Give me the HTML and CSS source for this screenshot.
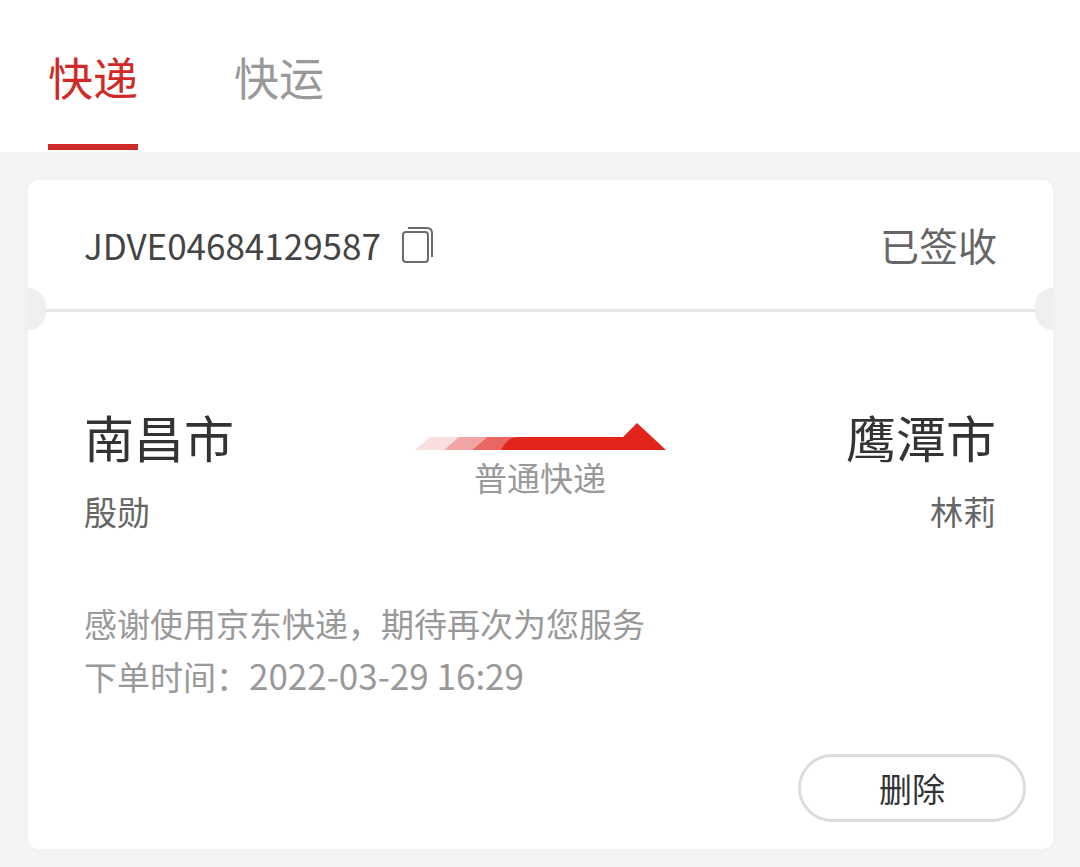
FILE: index.html
```
<!DOCTYPE html>
<html lang="zh-CN">
<head>
    <meta charset="UTF-8">
    <meta name="viewport" content="width=device-width, initial-scale=1.0">
    <title>快递</title>
    <link rel="stylesheet" href="styles.css">
</head>
<body>
    <header>
        <nav class="tabs">
            <a class="tab active" href="#">快递</a>
            <a class="tab" href="#">快运</a>
        </nav>
    </header>

    <main class="card">
        <div class="card-head">
            <span class="number">JDVE04684129587</span>
            <button class="copy" type="button" aria-label="复制">
                <svg width="32" height="38" viewBox="0 0 32 38" fill="none" stroke="#6b6b6b" stroke-width="2">
                    <rect x="2" y="6" width="25" height="30" rx="3"/>
                    <path d="M7 2H26Q31 2 31 7V31"/>
                </svg>
            </button>
            <span class="status">已签收</span>
        </div>

        <div class="divider"></div>

        <div class="card-body">
            <div class="route">
                <div class="place">
                    <h2>南昌市</h2>
                    <p>殷勋</p>
                </div>
                <div class="way">
                    <svg width="251" height="27" viewBox="0 0 251 27">
                        <path fill="#f9dede" d="M0 27L15 14H44L29 27Z"/>
                        <path fill="#f2a5a5" d="M29 27L44 14H72L57 27Z"/>
                        <path fill="#ea6663" d="M57 27L72 14H100L86 27Z"/>
                        <path fill="#e1251b" d="M86 27Q93 14 102 14H208L222 0L251 27Z"/>
                    </svg>
                    <p>普通快递</p>
                </div>
                <div class="place to">
                    <h2>鹰潭市</h2>
                    <p>林莉</p>
                </div>
            </div>

            <div class="message">
                <p>感谢使用京东快递，期待再次为您服务</p>
                <p>下单时间：<time datetime="2022-03-29T16:29">2022-03-29 16:29</time></p>
            </div>

            <div class="actions">
                <button class="delete" type="button">删除</button>
            </div>
        </div>
    </main>
</body>
</html>
```
FILE: styles.css
```
* {
    box-sizing: border-box;
}

body {
    margin: 0;
    background-color: #f4f4f4;
    color: #333;
    font-family: "Noto Sans CJK SC", sans-serif;
    font-size: 33px;
}

h2, p {
    margin: 0;
    font-weight: 400;
}

header {
    background-color: #fff;
    padding: 13px 48px 2px;
}

.tabs {
    display: flex;
    gap: 96px;
}

.tab {
    border-bottom: 6px solid transparent;
    padding-bottom: 3px;
    color: #999;
    font-size: 45px;
    line-height: 128px;
    text-decoration: none;
}

.tab.active {
    border-color: #cf2a27;
    color: #cf2a27;
}

.card {
    margin: 28px 27px 18px 28px;
    background-color: #fff;
    border-radius: 10px;
    box-shadow: 0 0 6px #eee;
}

.card-head {
    display: flex;
    align-items: center;
    padding: 32px 56px;
    line-height: 65px;
}

.number {
    color: #444;
    font-size: 35px;
}

.copy {
    display: flex;
    margin-left: 20px;
    border: none;
    padding: 0;
    background: none;
    cursor: pointer;
}

.status {
    margin-left: auto;
    color: #666;
    font-size: 39px;
}

/* line with a round notch at each end */
.divider {
    position: relative;
    margin: 0 18px;
    height: 3px;
    background-color: #e5e5e5;
}

.divider::before,
.divider::after {
    content: '';
    position: absolute;
    top: -21px;
    width: 18px;
    height: 42px;
    background-color: #efefef;
}

.divider::before {
    left: -18px;
    border-radius: 0 21px 21px 0;
}

.divider::after {
    right: -18px;
    border-radius: 21px 0 0 21px;
}

.card-body {
    padding: 94px 27px 27px 56px;
}

.route {
    display: grid;
    grid-template-columns: 1fr auto 1fr;
    padding-right: 30px;
}

.place h2 {
    font-size: 50px;
    line-height: 60px;
}

.place p {
    margin-top: 21px;
    color: #666;
    line-height: 48px;
}

.to {
    text-align: right;
}

.way {
    padding-top: 17px;
    color: #999;
    line-height: 48px;
    text-align: center;
}

.way svg {
    display: block;
    margin-bottom: 3px;
}

.message {
    margin-top: 62px;
    color: #999;
    line-height: 52px;
}

.message time {
    font-size: 35px;
}

.actions {
    display: flex;
    justify-content: flex-end;
    margin-top: 52px;
}

.delete {
    width: 228px;
    height: 68px;
    border: 3px solid #dcdcdc;
    border-radius: 34px;
    background-color: #fff;
    color: #333;
    font-family: inherit;
    font-size: 33px;
    line-height: 48px;
    cursor: pointer;
}
```
